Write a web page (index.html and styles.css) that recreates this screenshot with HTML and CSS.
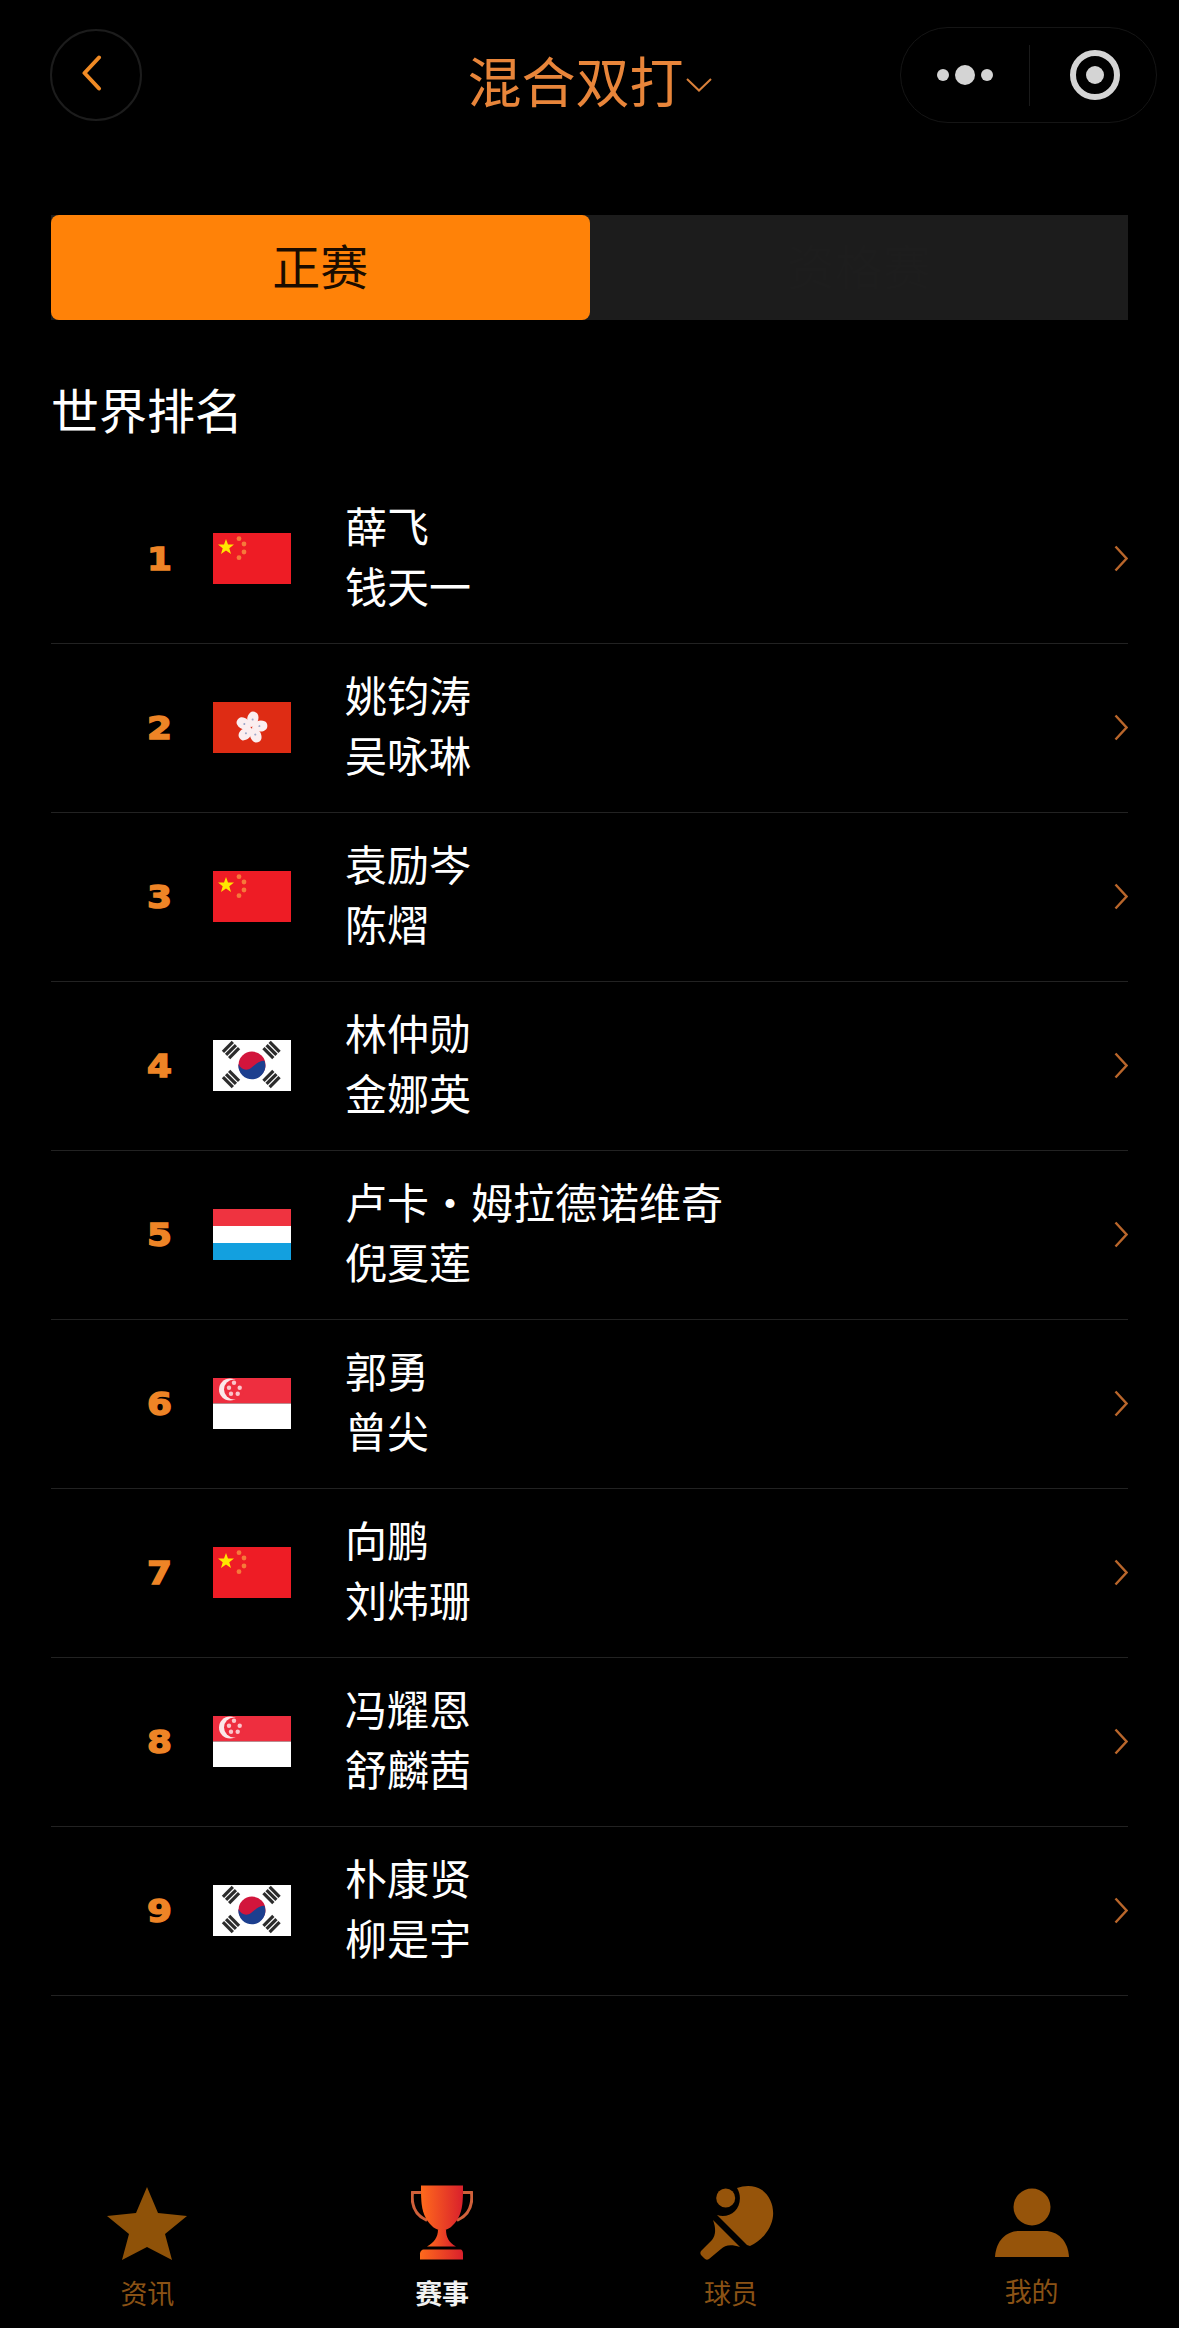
FILE: index.html
```html
<!DOCTYPE html>
<html lang="zh-CN">
<head>
<meta charset="utf-8">
<title>混合双打</title>
<link rel="stylesheet" href="styles.css">
</head>
<body>
<svg class="defs" aria-hidden="true">
  <defs>
    <symbol id="flag-cn" viewBox="0 0 78 51">
      <rect width="78" height="51" fill="#ee1c25"/>
      <polygon fill="#ffe600" points="13,6 15,11.4 21,11.6 16.3,15.2 18,21 13,17.6 8,21 9.7,15.2 5,11.6 11,11.4"/>
      <g fill="#f6793a"><circle cx="26" cy="5.7" r="2.4"/><circle cx="31" cy="11" r="2.4"/><circle cx="31" cy="19" r="2.4"/><circle cx="26" cy="24.7" r="2.4"/></g>
    </symbol>
    <symbol id="flag-hk" viewBox="0 0 78 51">
      <rect width="78" height="51" fill="#de2c14"/>
      <g transform="translate(38.5 25.5) rotate(8)">
        <g id="hk-petal"><path fill="#fbeef0" d="M0,-0.5 C-6,-4 -7,-10 -3.5,-14.5 C-2,-16.5 2,-16.5 4,-14.5 C7,-11 6,-4 0,-0.5Z"/><circle cx="0" cy="-8" r="1" fill="#9fa8c8"/></g>
        <use href="#hk-petal" transform="rotate(72)"/>
        <use href="#hk-petal" transform="rotate(144)"/>
        <use href="#hk-petal" transform="rotate(216)"/>
        <use href="#hk-petal" transform="rotate(288)"/>
      </g>
    </symbol>
    <symbol id="flag-kr" viewBox="0 0 78 51">
      <rect width="78" height="51" fill="#fff"/>
      <circle cx="39" cy="25" r="13.5" fill="#d2153c"/>
      <path fill="#1c3f8f" d="M25.5,24 C28,30 34,31 38,28 C42,25 47,20 51.5,21 A13.5,13.5 0 1 1 25.5,24Z"/>
      <g id="kr-tri" fill="#2c2c2c">
        <g transform="translate(18 10) rotate(-45)"><rect x="-7" y="-6" width="14" height="3.2"/><rect x="-7" y="-1.6" width="14" height="3.2"/><rect x="-7" y="2.8" width="14" height="3.2"/></g>
        <g transform="translate(58.5 10) rotate(45)"><rect x="-7" y="-6" width="14" height="3.2"/><rect x="-7" y="-1.6" width="14" height="3.2"/><rect x="-7" y="2.8" width="14" height="3.2"/></g>
        <g transform="translate(18 39) rotate(45)"><rect x="-7" y="-6" width="14" height="3.2"/><rect x="-7" y="-1.6" width="14" height="3.2"/><rect x="-7" y="2.8" width="14" height="3.2"/></g>
        <g transform="translate(58.5 39) rotate(-45)"><rect x="-7" y="-6" width="14" height="3.2"/><rect x="-7" y="-1.6" width="14" height="3.2"/><rect x="-7" y="2.8" width="14" height="3.2"/></g>
      </g>
    </symbol>
    <symbol id="flag-lu" viewBox="0 0 78 51">
      <rect width="78" height="17" fill="#ef3340"/>
      <rect y="17" width="78" height="17" fill="#fff"/>
      <rect y="34" width="78" height="17" fill="#13a0df"/>
    </symbol>
    <symbol id="flag-sg" viewBox="0 0 78 51">
      <rect width="78" height="25.5" fill="#ee2e3f"/>
      <rect y="25.5" width="78" height="25.5" fill="#fff"/>
      <circle cx="17" cy="11.5" r="11" fill="#fbe9ea"/>
      <circle cx="21" cy="11.5" r="10" fill="#ee2e3f"/>
      <g fill="#fbc5ca"><circle cx="21" cy="4.7" r="2.2"/><circle cx="26.7" cy="9.7" r="2.2"/><circle cx="24.7" cy="15.7" r="2.2"/><circle cx="18" cy="15.7" r="2.2"/><circle cx="16" cy="9.7" r="2.2"/></g>
    </symbol>
    <symbol id="row-chevron" viewBox="0 0 14 27">
      <path d="M1.5,1.5 L12.5,13.5 L1.5,25.5" fill="none" stroke="#b9662b" stroke-width="2.4"/>
    </symbol>
    <linearGradient id="trophy-fill" x1="0" y1="0" x2="1" y2="0">
      <stop offset="0" stop-color="#ff6a1c"/>
      <stop offset="1" stop-color="#d9202c"/>
    </linearGradient>
  </defs>
</svg>

<header class="topbar">
  <button class="back" type="button" aria-label="返回">
    <svg class="back-icon" viewBox="0 0 21 36"><path d="M18,2.5 L3.5,18 L18,33.5" fill="none" stroke="#f08a24" stroke-width="4" stroke-linecap="round" stroke-linejoin="round"/></svg>
  </button>
  <div class="title">
    <span>混合双打</span>
    <svg class="title-caret" viewBox="0 0 26 14"><path d="M1,1 L13,12.5 L25,1" fill="none" stroke="#d9803a" stroke-width="2"/></svg>
  </div>
  <div class="capsule">
    <div class="capsule-dots"><i class="dot"></i><i class="dot dot-big"></i><i class="dot"></i></div>
    <i class="capsule-line"></i>
    <div class="capsule-target"><i class="target-core"></i></div>
  </div>
</header>

<main class="content">
  <div class="tabs">
    <div class="tab tab-on">正赛</div>
    <div class="tab tab-off">资格赛</div>
  </div>

  <h1 class="section">世界排名</h1>

  <ul class="list">
    <li class="row"><span class="rank">1</span><svg class="flag"><use href="#flag-cn"/></svg><div class="names"><p>薛飞</p><p>钱天一</p></div><svg class="chev"><use href="#row-chevron"/></svg></li>
    <li class="row"><span class="rank">2</span><svg class="flag"><use href="#flag-hk"/></svg><div class="names"><p>姚钧涛</p><p>吴咏琳</p></div><svg class="chev"><use href="#row-chevron"/></svg></li>
    <li class="row"><span class="rank">3</span><svg class="flag"><use href="#flag-cn"/></svg><div class="names"><p>袁励岑</p><p>陈熠</p></div><svg class="chev"><use href="#row-chevron"/></svg></li>
    <li class="row"><span class="rank">4</span><svg class="flag"><use href="#flag-kr"/></svg><div class="names"><p>林仲勋</p><p>金娜英</p></div><svg class="chev"><use href="#row-chevron"/></svg></li>
    <li class="row"><span class="rank">5</span><svg class="flag"><use href="#flag-lu"/></svg><div class="names"><p>卢卡・姆拉德诺维奇</p><p>倪夏莲</p></div><svg class="chev"><use href="#row-chevron"/></svg></li>
    <li class="row"><span class="rank">6</span><svg class="flag"><use href="#flag-sg"/></svg><div class="names"><p>郭勇</p><p>曾尖</p></div><svg class="chev"><use href="#row-chevron"/></svg></li>
    <li class="row"><span class="rank">7</span><svg class="flag"><use href="#flag-cn"/></svg><div class="names"><p>向鹏</p><p>刘炜珊</p></div><svg class="chev"><use href="#row-chevron"/></svg></li>
    <li class="row"><span class="rank">8</span><svg class="flag"><use href="#flag-sg"/></svg><div class="names"><p>冯耀恩</p><p>舒麟茜</p></div><svg class="chev"><use href="#row-chevron"/></svg></li>
    <li class="row"><span class="rank">9</span><svg class="flag"><use href="#flag-kr"/></svg><div class="names"><p>朴康贤</p><p>柳是宇</p></div><svg class="chev"><use href="#row-chevron"/></svg></li>
  </ul>
</main>

<nav class="tabbar">
  <div class="nav-item">
    <svg class="nav-icon" width="80" height="72" viewBox="0 0 80 72"><polygon fill="#8f5208" points="40,0 51,26 80,29 58,47 65,73 40,60 15,73 22,47 0,29 29,26"/></svg>
    <span class="nav-label">资讯</span>
  </div>
  <div class="nav-item">
    <svg class="nav-icon" width="62" height="75" viewBox="0 0 62 75">
      <path d="M10,7 H1.5 C0,20 5,30 16,35 M52,7 H60.5 C62,20 57,30 46,35" fill="none" stroke="#d0603a" stroke-width="3"/>
      <path fill="url(#trophy-fill)" d="M10,0 H52 C52,14 52,24 47,33 C43,40 37,45 31,45 C25,45 19,40 15,33 C10,24 10,14 10,0Z"/>
      <path fill="url(#trophy-fill)" d="M27,44 H35 C35,52 38,57 45,61 H16 C23,57 27,52 27,44Z"/>
      <path fill="url(#trophy-fill)" d="M12.5,64 H49.5 C51,64 52,66 52,68 V74 H9 V68 C9,66 11,64 12.5,64Z"/>
    </svg>
    <span class="nav-label nav-label-on">赛事</span>
  </div>
  <div class="nav-item nav-item-shift">
    <svg class="nav-icon nav-icon-paddle" width="74" height="74" viewBox="0 0 74 74">
      <circle cx="25.7" cy="12" r="9.5" fill="#96540a"/>
      <path fill="#96540a" d="M37,2 C45,-1 55,-1 62,4 C70,10 74,20 73,30 C72,42 62,55 50,60 L47,59 L17,29 C23,31 30,30 35,25 C40,20 42,10 37,2Z"/>
      <path fill="#96540a" d="M13,34 L40,61 C31,58 25,59 21,63 L9,73 C7,74 6,74 4,72 L1,69 C0,67 0,66 2,64 L12,54 C16,49 16,42 13,34Z"/>
    </svg>
    <span class="nav-label">球员</span>
  </div>
  <div class="nav-item nav-item-raise">
    <svg class="nav-icon" width="74" height="70" viewBox="0 0 74 70">
      <circle cx="37" cy="19" r="18.5" fill="#96540a"/>
      <path fill="#96540a" d="M0,69 C1,52 12,43 24,43 H50 C62,43 73,52 74,69Z"/>
    </svg>
    <span class="nav-label">我的</span>
  </div>
</nav>
</body>
</html>
```
FILE: styles.css
```css
* { box-sizing: border-box; }

html, body { margin: 0; padding: 0; }

body {
  width: 1179px;
  height: 2328px;
  background: #000;
  color: #fff;
  font-family: "Noto Sans CJK SC", "Noto Sans", sans-serif;
  display: flex;
  flex-direction: column;
  overflow: hidden;
}

.defs { width: 0; height: 0; position: absolute; }

/* top bar */
.topbar {
  display: grid;
  grid-template-columns: 1fr auto 1fr;
  align-items: center;
  padding: 27px 22px 0;
}

.back {
  justify-self: start;
  margin-left: 28px;
  width: 92px;
  height: 92px;
  padding: 0;
  border: 2px solid #1c1c1c;
  border-radius: 50%;
  background: transparent;
  display: flex;
  align-items: center;
  justify-content: center;
}

.back-icon { width: 21px; height: 36px; margin: -4px 10px 0 0; }

.title {
  display: flex;
  align-items: center;
  gap: 2px;
  margin-top: 10px;
  font-size: 54px;
  line-height: 70px;
  color: #e8853a;
}

.title-caret { width: 26px; height: 14px; margin-top: 10px; }

.capsule {
  justify-self: end;
  width: 257px;
  height: 96px;
  border: 1px solid #151515;
  border-radius: 48px;
  display: flex;
  align-items: center;
}

.capsule-dots {
  width: 128px;
  display: flex;
  align-items: center;
  justify-content: center;
  gap: 6px;
}

.dot { width: 12px; height: 12px; border-radius: 50%; background: #d4d4d4; }
.dot-big { width: 20px; height: 20px; }

.capsule-line { width: 1px; height: 61px; background: #1a1a1a; }

.capsule-target {
  width: 50px;
  height: 50px;
  margin-left: 40px;
  border: 6px solid #d4d4d4;
  border-radius: 50%;
  display: flex;
  align-items: center;
  justify-content: center;
}

.target-core { width: 18px; height: 18px; border-radius: 50%; background: #d4d4d4; }

/* content */
.content { padding: 0 51px; }

.tabs {
  display: grid;
  grid-template-columns: 1fr 1fr;
  height: 105px;
  margin-top: 92px;
  background: #1c1c1c;
}

.tab {
  display: flex;
  align-items: center;
  justify-content: center;
  padding-bottom: 8px;
  font-size: 48px;
  line-height: 1;
}

.tab-on { background: #ff8208; color: #1a0c00; border-radius: 8px; }
.tab-off { color: #1d1d1d; }

.section {
  margin: 54px 0 33px;
  font-size: 48px;
  font-weight: 400;
  line-height: 68px;
}

.list { list-style: none; margin: 0; padding: 0; }

.row {
  display: flex;
  align-items: center;
  height: 169px;
  padding-bottom: 1px;
  border-bottom: 1px solid #222;
}

.rank {
  width: 121px;
  text-align: right;
  font-family: "DejaVu Sans", sans-serif;
  font-weight: 700;
  font-size: 32px;
  color: #ee8426;
  -webkit-text-stroke: 1.4px #ee8426;
  transform: scaleX(1.12);
  transform-origin: right center;
}

.flag { width: 78px; height: 51px; margin-left: 41px; flex: none; }

.names {
  margin-left: 54px;
  padding-bottom: 8px;
  flex: 1;
  font-size: 42px;
  line-height: 60px;
}
.names p { margin: 0; }

.chev { width: 14px; height: 27px; flex: none; }

/* bottom navigation */
.tabbar {
  margin-top: auto;
  display: grid;
  grid-template-columns: repeat(4, 1fr);
  padding-bottom: 17px;
}

.nav-item {
  display: flex;
  flex-direction: column;
  align-items: center;
}

.nav-item-shift { padding-right: 12px; }

.nav-icon { height: 76px; display: block; }

.nav-icon-paddle { margin-left: 12px; }

.nav-label {
  margin-top: 14px;
  font-size: 27px;
  line-height: 36px;
  color: #8a5215;
}

.nav-label-on { color: #f2f2f2; font-weight: 700; }

.nav-item-raise .nav-label { margin-top: 12px; }
```
